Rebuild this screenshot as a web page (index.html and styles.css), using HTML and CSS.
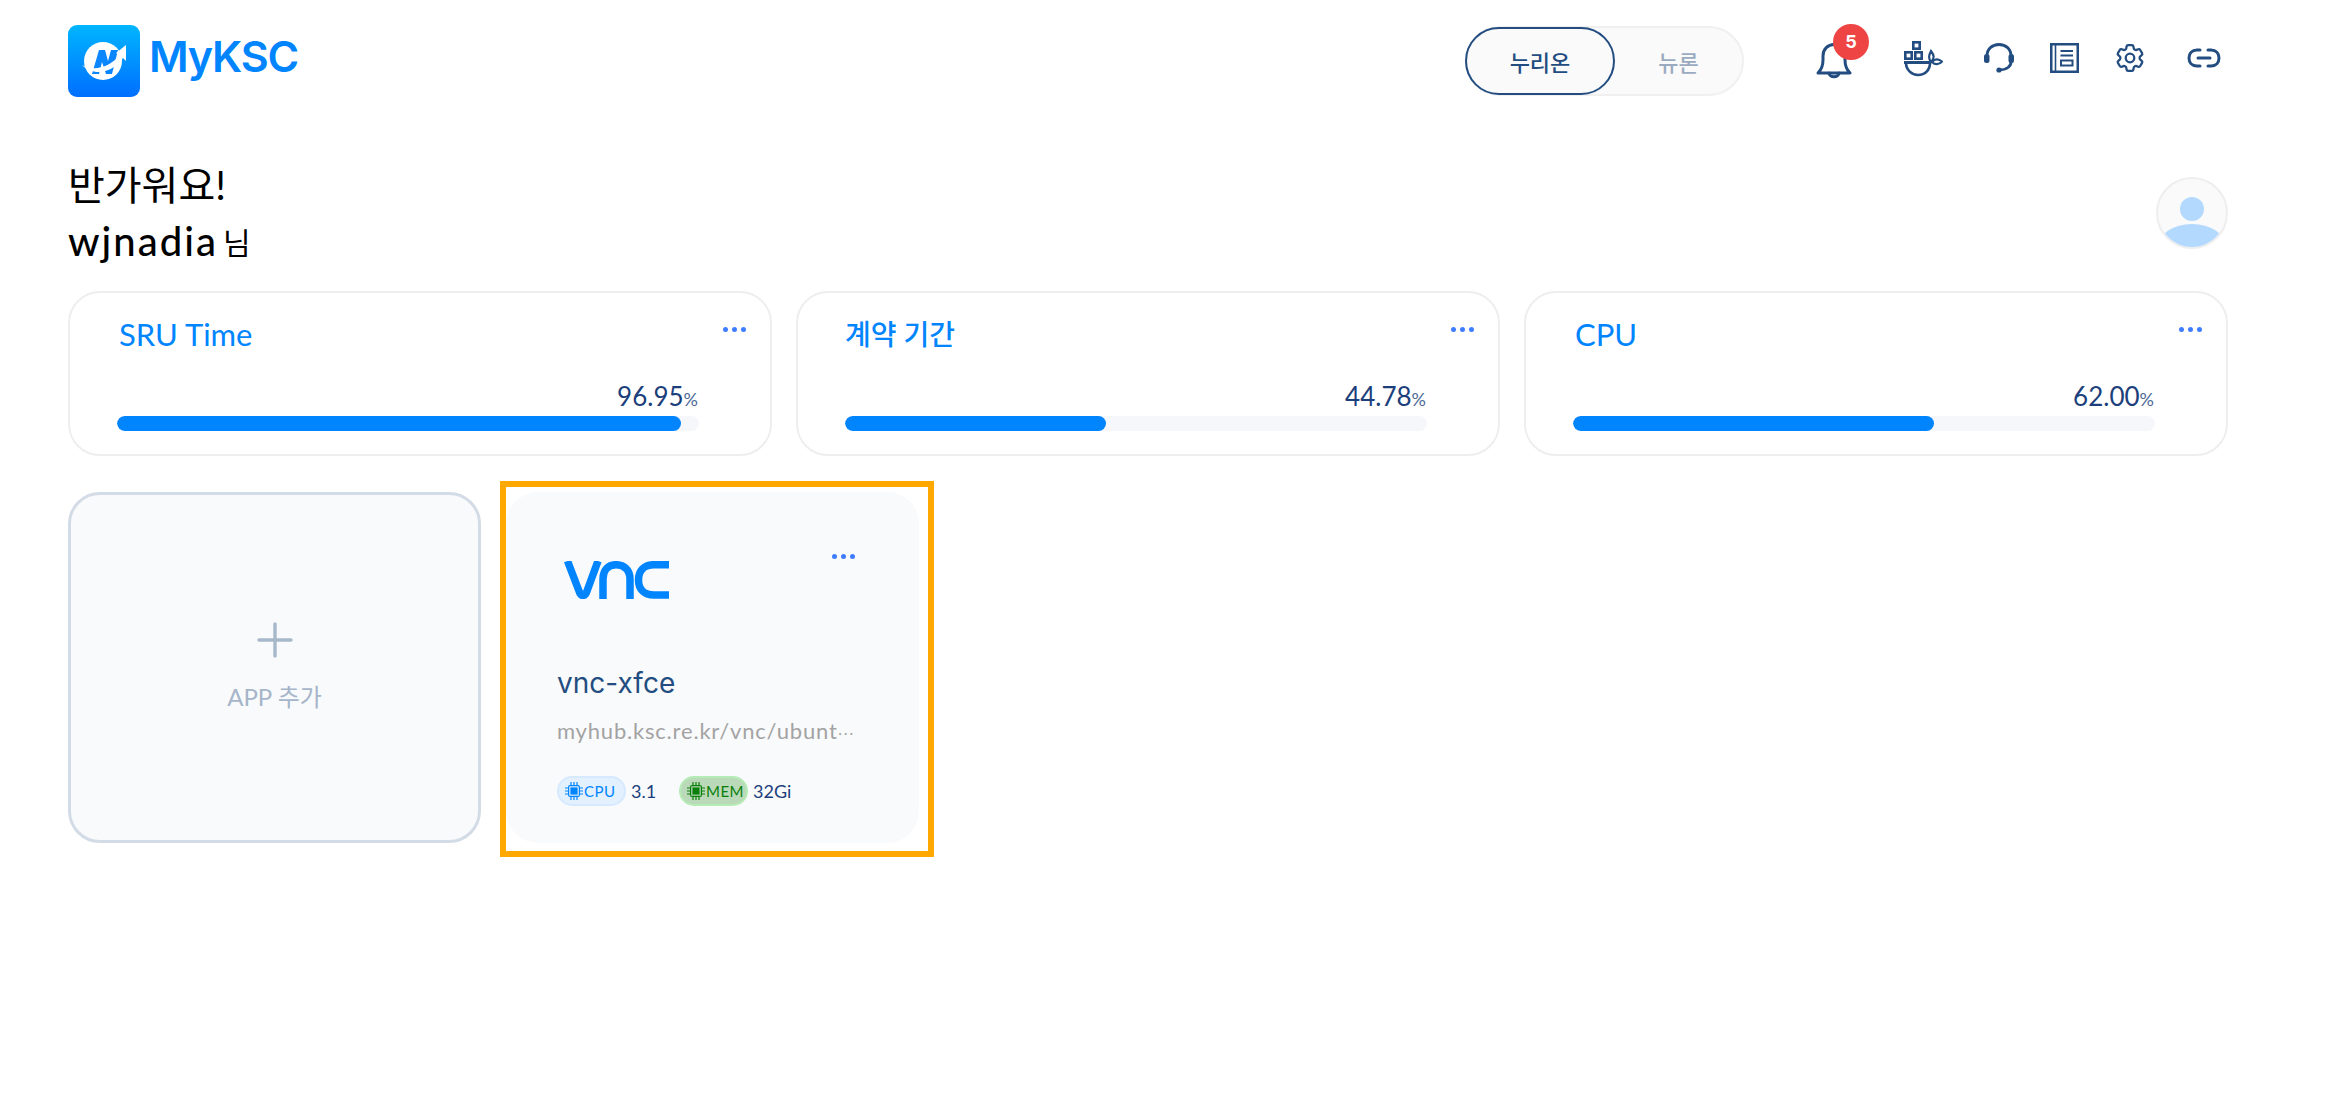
FILE: index.html
```html
<!DOCTYPE html>
<html>
	<head>
		<meta charset="UTF-8">
		<title>MyKSC</title>
		<link rel="stylesheet" href="styles.css">
	</head>
	<body>
		<div class="page">
			<header class="top">
				<a class="logo" href="#">
					<svg class="logo-mark" width="72" height="72" viewBox="0 0 72 72">
						<defs>
							<linearGradient id="lg" x1="0" y1="0" x2="0" y2="1">
								<stop offset="0" stop-color="#00b6ff"/>
								<stop offset="1" stop-color="#006eff"/>
							</linearGradient>
						</defs>
						<rect width="72" height="72" rx="9" fill="url(#lg)"/>
						<circle cx="35" cy="36" r="19" fill="#fff"/>
						<path d="M24 49 L31 25 H37 L40 36 L43 25 H50 L44 49 H38 L34 37 L31 49 Z" fill="#0a86ff"/>
						<path d="M14 40 C26 47 42 42 52 30 L48 28 L58 20 L58 36 L55 33 C44 48 26 52 14 40 Z" fill="#fff"/>
					</svg>
					<span class="logo-text">MyKSC</span>
				</a>
				<div class="switch">
					<button class="switch-btn on">누리온</button>
					<button class="switch-btn">뉴론</button>
				</div>
				<nav class="tools">
					<a class="tool bell" href="#">
						<svg width="36" height="36" viewBox="0 0 36 36" fill="none" stroke="#234d80" stroke-width="3" stroke-linejoin="round" stroke-linecap="round">
							<path d="M2 30 C5 27 7 24 7 17 V13 C7 6 12 1.5 18 1.5 C24 1.5 29 6 29 13 V17 C29 24 31 27 34 30 Z"/>
							<path d="M13 30 C13 35 23 35 23 30"/>
						</svg>
						<span class="badge">5</span>
					</a>
					<a class="tool docker" href="#">
						<svg width="39" height="36" viewBox="0 0 39 36" fill="none" stroke="#234d80" stroke-width="2.6">
							<rect x="9.3" y="1.3" width="6.4" height="6.4"/>
							<rect x="1.3" y="11.3" width="6.4" height="6.4"/>
							<rect x="11.3" y="11.3" width="6.4" height="6.4"/>
							<path d="M0 21.5 H26" stroke-width="3"/>
							<path d="M2 22 C2 29 8 34 14 34 C21 34 26 29 26 22"/>
							<path d="M27 21 C24 17 25 14 27 10 C30 14 31 17 27 21 Z M28 21 C31 17 35 18 38 20.5 C35 24 31 24 28 21 Z" stroke-width="2.2"/>
						</svg>
					</a>
					<a class="tool headset" href="#">
						<svg width="30" height="30" viewBox="0 0 30 30" fill="none" stroke="#234d80" stroke-width="2.8" stroke-linecap="round">
							<path d="M3 13 C3 6 8 1.5 15 1.5 C22 1.5 27 6 27 13"/>
							<path d="M27 19 C27 23 23 27 15 27"/>
							<rect x="0" y="11" width="5.5" height="9" rx="2.5" fill="#234d80" stroke="none"/>
							<rect x="24.5" y="11" width="5.5" height="9" rx="2.5" fill="#234d80" stroke="none"/>
							<circle cx="15" cy="27" r="2.6" fill="#234d80" stroke="none"/>
						</svg>
					</a>
					<a class="tool book" href="#">
						<svg width="29" height="30" viewBox="0 0 29 30" fill="none" stroke="#234d80" stroke-width="2.5">
							<rect x="1.25" y="1.25" width="26.5" height="27.5"/>
							<path d="M5.5 1 V29" stroke-width="1.6"/>
							<path d="M10.5 8 H23 M10.5 12.5 H23" stroke-width="2"/>
							<rect x="11" y="17.5" width="11.5" height="5" stroke-width="2"/>
						</svg>
					</a>
					<a class="tool gear" href="#">
						<svg width="30" height="30" viewBox="1.5 1.5 21 21" fill="none" stroke="#234d80" stroke-width="1.6">
							<path d="M9.594 3.94c.09-.542.56-.94 1.11-.94h2.593c.55 0 1.02.398 1.11.94l.213 1.281c.063.374.313.686.645.87.074.04.147.083.22.127.325.196.72.257 1.075.124l1.217-.456a1.125 1.125 0 0 1 1.37.49l1.296 2.247a1.125 1.125 0 0 1-.26 1.431l-1.003.827c-.293.241-.438.613-.43.992a7.723 7.723 0 0 1 0 .255c-.008.378.137.75.43.991l1.004.827c.424.35.534.955.26 1.43l-1.298 2.247a1.125 1.125 0 0 1-1.369.491l-1.217-.456c-.355-.133-.75-.072-1.076.124a6.47 6.47 0 0 1-.22.128c-.331.183-.581.495-.644.869l-.213 1.281c-.09.543-.56.94-1.11.94h-2.594c-.55 0-1.019-.398-1.11-.94l-.213-1.281c-.062-.374-.312-.686-.644-.87a6.52 6.52 0 0 1-.22-.127c-.325-.196-.72-.257-1.076-.124l-1.217.456a1.125 1.125 0 0 1-1.369-.49l-1.297-2.247a1.125 1.125 0 0 1 .26-1.431l1.004-.827c.292-.24.437-.613.43-.991a6.932 6.932 0 0 1 0-.255c.007-.38-.138-.751-.43-.992l-1.004-.827a1.125 1.125 0 0 1-.26-1.43l1.297-2.247a1.125 1.125 0 0 1 1.37-.491l1.216.456c.356.133.751.072 1.076-.124.072-.044.146-.086.22-.128.332-.183.582-.495.644-.869l.214-1.28Z"/>
							<circle cx="12" cy="12" r="3"/>
						</svg>
					</a>
					<a class="tool link" href="#">
						<svg width="34" height="20" viewBox="0 0 34 20" fill="none" stroke="#234d80" stroke-width="3" stroke-linecap="round">
							<path d="M13 2 H10 C5 2 2 5.5 2 10 C2 14.5 5 18 10 18 H13"/>
							<path d="M21 2 H24 C29 2 32 5.5 32 10 C32 14.5 29 18 24 18 H21"/>
							<path d="M11 10 H23"/>
						</svg>
					</a>
				</nav>
			</header>

			<section class="hello">
				<div>
					<h1 class="hello-title">반가워요!</h1>
					<p class="hello-name">wjnadia<small>님</small></p>
				</div>
				<div class="avatar">
					<svg width="68" height="68" viewBox="0 0 68 68">
						<circle cx="34" cy="30" r="12" fill="#b3d9ff"/>
						<ellipse cx="34" cy="68" rx="34" ry="23" fill="#b3d9ff"/>
					</svg>
				</div>
			</section>

			<section class="stats">
				<div class="stat">
					<span class="more"><i></i><i></i><i></i></span>
					<h2 class="stat-title">SRU Time</h2>
					<div class="stat-value">96.95<small>%</small></div>
					<div class="bar"><div class="bar-fill" style="width:96.95%"></div></div>
				</div>
				<div class="stat">
					<span class="more"><i></i><i></i><i></i></span>
					<h2 class="stat-title ko">계약 기간</h2>
					<div class="stat-value">44.78<small>%</small></div>
					<div class="bar"><div class="bar-fill" style="width:44.78%"></div></div>
				</div>
				<div class="stat">
					<span class="more"><i></i><i></i><i></i></span>
					<h2 class="stat-title">CPU</h2>
					<div class="stat-value">62.00<small>%</small></div>
					<div class="bar"><div class="bar-fill" style="width:62%"></div></div>
				</div>
			</section>

			<section class="apps">
				<a class="tile add" href="#">
					<svg width="36" height="36" viewBox="0 0 36 36" stroke="#a6b8ca" stroke-width="3.4" stroke-linecap="round">
						<path d="M18 2 V34 M2 18 H34"/>
					</svg>
					<span>APP 추가</span>
				</a>
				<div class="tile app">
					<span class="more"><i></i><i></i><i></i></span>
					<svg class="vnc" width="105" height="38" viewBox="0 0 105 38" fill="none" stroke="#0085ff" stroke-width="7.5">
						<path d="M3.5 0 L15 30 C17 36 21 36 23 30 L34 0" stroke-linejoin="round"/>
						<path d="M39 38 V18 C39 8 45 3.7 52 3.7 C59 3.7 66 8 66 18 V38" />
						<path d="M105 3.7 H90 C80 3.7 74.5 10 74.5 19 C74.5 28 80 34 90 34 H105"/>
					</svg>
					<div class="app-name">vnc-xfce</div>
					<div class="app-url">myhub.ksc.re.kr/vnc/ubunt<span class="dots">⋯</span></div>
					<div class="app-res">
						<span class="chip cpu">
							<svg width="20" height="20" viewBox="0 0 20 20" fill="none" stroke="currentColor" stroke-width="1.2">
								<rect x="4.6" y="4.6" width="10.8" height="10.8" rx="1.5"/>
								<rect x="6.4" y="6.4" width="7.2" height="7.2" fill="currentColor" stroke="none"/>
								<path d="M7 1 V19 M10 1 V19 M13 1 V19 M1 7 H19 M1 10 H19 M1 13 H19" stroke-dasharray="3.5 11 3.5"/>
							</svg>CPU</span>
						<span class="res-val">3.1</span>
						<span class="chip mem">
							<svg width="20" height="20" viewBox="0 0 20 20" fill="none" stroke="currentColor" stroke-width="1.2">
								<rect x="4.6" y="4.6" width="10.8" height="10.8" rx="1.5"/>
								<rect x="6.4" y="6.4" width="7.2" height="7.2" fill="currentColor" stroke="none"/>
								<path d="M7 1 V19 M10 1 V19 M13 1 V19 M1 7 H19 M1 10 H19 M1 13 H19" stroke-dasharray="3.5 11 3.5"/>
							</svg>MEM</span>
						<span class="res-val">32Gi</span>
					</div>
					<div class="focus"></div>
				</div>
			</section>
		</div>
	</body>
</html>
```

FILE: styles.css
```css
*{margin: 0;padding: 0;box-sizing: border-box;}
html,body{background: #fff;}
body{font-family: "Lato","Noto Sans CJK KR",sans-serif;color: #000;}
a{text-decoration: none;color: inherit;}
.page{width: 2228px;min-height: 1108px;padding: 25px 0 0 68px;}

.top{display: flex;align-items: center;height: 72px;}
.logo{display: flex;align-items: center;gap: 9px;}
.logo-mark{display: block;}
.logo-text{margin-top: -10px;font-family: "Inter",sans-serif;font-weight: 600;font-size: 43px;color: #0085ff;letter-spacing: -1.2px;}

.switch{display: flex;width: 279px;height: 70px;margin-left: auto;background: #fafafa;border: 2px solid #f0f0f0;border-radius: 35px;}
.switch-btn{height: 70px;margin: -2px 0;border: 0;background: none;font-family: "Noto Sans CJK KR",sans-serif;font-size: 22px;font-weight: 500;color: #9aabc0;flex: 1;}
.switch-btn.on{flex: none;width: 150px;margin: -1px 0 -1px -2px;height: 68px;border: 2px solid #234d80;border-radius: 34px;color: #234d80;}

.tools{display: flex;align-items: flex-start;align-self: flex-start;margin: 18px 7px 0 72px;}
.tool{display: block;position: relative;}
.tool svg{display: block;}
.docker{margin: -2px 0 0 52px;}
.headset{margin-left: 41px;}
.book{margin-left: 36px;}
.gear{margin-left: 36px;}
.link{margin: 5px 0 0 42px;}
.badge{position: absolute;top: -19px;left: 17px;width: 36px;height: 36px;line-height: 36px;border-radius: 50%;background: #ef4444;color: #fff;font-size: 18px;font-weight: 700;text-align: center;font-family: "Inter",sans-serif;}

.hello{display: flex;justify-content: space-between;align-items: center;height: 126px;margin-top: 53px;}
.hello-title{margin-top: 1px;font-size: 40px;font-weight: 400;line-height: 60px;}
.hello-name{margin-top: -4px;font-size: 40px;font-weight: 500;line-height: 60px;letter-spacing: 2px;}
.hello-name small{margin-left: 5px;font-size: 30px;font-weight: 400;letter-spacing: 0;vertical-align: 2px;}
.avatar{width: 72px;height: 72px;border-radius: 50%;border: 2px solid #eee;background: #fafafa;overflow: hidden;}
.avatar svg{display: block;}

.stats{display: grid;grid-template-columns: repeat(3,704px);gap: 24px;margin-top: 15px;}
.stat{position: relative;height: 165px;padding: 23px 71px 0 47px;border: 2px solid #eee;border-radius: 32px;background: #fff;}
.stat-title{font-size: 31px;font-weight: 400;line-height: 36px;color: #0085ff;padding-left: 2px;}
.stat-title.ko{padding-left: 0;font-size: 28px;font-weight: 500;}
.stat-value{margin-top: 29px;height: 30px;padding-right: 1px;line-height: 30px;text-align: right;font-size: 26px;color: #1c3f7c;}
.stat-value small{font-size: 18px;color: #4d6a96;}
.bar{height: 15px;margin-top: 5px;border-radius: 8px;background: #f6f7fb;overflow: hidden;}
.bar-fill{height: 15px;border-radius: 8px;background: #0085ff;}

.more{position: absolute;display: flex;gap: 4px;}
.more i{display: block;width: 5px;height: 5px;border-radius: 50%;background: #3f7dff;}
.stat .more{top: 34px;right: 24px;}

.apps{display: grid;grid-template-columns: repeat(auto-fill,413px);gap: 25px;margin-top: 36px;}
.tile{position: relative;height: 351px;border-radius: 32px;background: #f9fafc;}
.add{display: flex;flex-direction: column;align-items: center;justify-content: center;gap: 20px;border: 3px solid #d3dce6;color: #a6b5c9;font-size: 24px;}
.app{padding: 69px 45px 0 51px;}
.app .more{top: 62px;right: 64px;}
.vnc{display: block;margin-left: 7px;}
.app-name{margin-top: 64px;font-family: "Inter",sans-serif;font-size: 28px;font-weight: 400;line-height: 40px;color: #234d80;}
.app-url{margin-top: 11px;font-size: 22px;line-height: 30px;letter-spacing: .8px;color: #a3a3a3;white-space: nowrap;}
.dots{font-family: "Noto Sans CJK KR",sans-serif;font-size: 15px;letter-spacing: 0;vertical-align: 4px;}
.app-res{display: flex;align-items: center;margin-top: 30px;font-size: 18px;color: #1c3f7c;}
.chip{display: flex;align-items: center;width: 69px;height: 30px;padding-left: 5px;border-radius: 15px;font-size: 15px;letter-spacing: .5px;}
.cpu{background: #e3f1ff;border: 2px solid #d6e9ff;color: #0085ff;}
.mem{background: #b9d9b9;border: 2px solid #b5ecb5;color: #0a7f0a;}
.res-val{margin-left: 5px;width: 48px;}
.focus{position: absolute;left: -6px;top: -11px;width: 434px;height: 376px;border: 6px solid #ffa800;pointer-events: none;}
```
